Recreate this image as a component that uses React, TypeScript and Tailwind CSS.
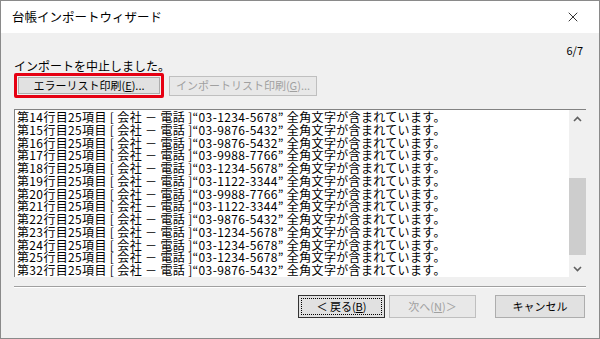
import { X } from "lucide-react";

const rows = [
  { no: 14, tel: "03-1234-5678" },
  { no: 15, tel: "03-9876-5432" },
  { no: 16, tel: "03-9876-5432" },
  { no: 17, tel: "03-9988-7766" },
  { no: 18, tel: "03-1234-5678" },
  { no: 19, tel: "03-1122-3344" },
  { no: 20, tel: "03-9988-7766" },
  { no: 21, tel: "03-1122-3344" },
  { no: 22, tel: "03-9876-5432" },
  { no: 23, tel: "03-1234-5678" },
  { no: 24, tel: "03-1234-5678" },
  { no: 25, tel: "03-1234-5678" },
  { no: 32, tel: "03-9876-5432" },
  { no: 33, tel: "03-1234-5678" },
];

const font = "font-['Noto_Sans_CJK_JP','Noto_Sans',sans-serif]";

const Chevron = ({ down }: { down?: boolean }) => (
  <svg width="9" height="6" viewBox="0 0 9 6" className="text-[#606060]">
    <path
      d={down ? "M1 1 L4.5 4.5 L8 1" : "M1 5 L4.5 1.5 L8 5"}
      fill="none"
      stroke="currentColor"
      strokeWidth="1.6"
    />
  </svg>
);

export default function App() {
  return (
    <div
      className={`flex h-[339px] w-[600px] flex-col border border-[#8a8a8a] bg-[#f0f0f0] text-black ${font}`}>
      {/* Title bar */}
      <div className="flex h-[32px] shrink-0 items-center justify-between bg-white pl-[11px] pr-[18px]">
        <span className="text-[12.5px]">台帳インポートウィザード</span>
        <X size={16} strokeWidth={1.2} className="text-black" />
      </div>

      {/* Body */}
      <div className="flex flex-1 flex-col px-[13px] pt-[10px]">
        <div className="h-[15px] pr-[3px] text-right text-[11px] leading-[15px]">
          6/7
        </div>
        <div className="mt-[1px] h-[14px] text-[12px] leading-[14px]">
          インポートを中止しました。
        </div>

        <div className="flex items-center gap-[5px]">
          <div className="h-[25px] w-[150px] rounded-[2px] border-[3px] border-[#e60012] p-[1px]">
            <button className="flex h-full w-full items-center justify-center border border-[#adadad] bg-[#e1e1e1] text-[11px]">
              エラーリスト印刷(<span className="underline">E</span>)...
            </button>
          </div>
          <button className="flex h-[20px] w-[148px] items-center justify-center border border-[#bfbfbf] bg-[#e8e8e8] text-[11px] text-[#a0a0a0]">
            インポートリスト印刷(<span className="underline">G</span>)...
          </button>
        </div>

        {/* List box */}
        <div className="mt-[11px] flex h-[168px] border-l border-t border-[#828282] border-b-white border-r-white bg-white">
          <div className="flex-1 overflow-hidden pl-[2px] pt-[1px]">
            {rows.map((r) => (
              <div
                key={r.no}
                className="whitespace-nowrap text-[12px] leading-[12.75px] tracking-[0.35px]">
                第{r.no}行目25項目 [ 会社 － 電話 ]“{r.tel}” 全角文字が含まれています。
              </div>
            ))}
          </div>
          <div className="flex w-[17px] flex-col bg-[#f0f0f0]">
            <div className="flex h-[17px] items-center justify-center">
              <Chevron />
            </div>
            <div className="flex-1 pt-[51px] pb-[3px]">
              <div className="h-[77px] w-full bg-[#cdcdcd]" />
            </div>
            <div className="flex h-[17px] items-center justify-center">
              <Chevron down />
            </div>
          </div>
        </div>

        {/* Separator */}
        <div className="mt-[9px] h-[2px] border-t border-[#a0a0a0] border-b border-b-white" />

        {/* Footer buttons */}
        <div className="mt-[7px] flex justify-end pr-[1px]">
          <button className="flex h-[23px] w-[87px] items-center justify-center border border-[#333] bg-[#e1e1e1] p-[2px] text-[11px]">
            <span className="flex h-full w-full items-center justify-center border border-dotted border-black">
              ＜ 戻る(<span className="underline">B</span>)
            </span>
          </button>
          <button className="ml-[4px] flex h-[23px] w-[87px] items-center justify-center border border-[#bfbfbf] bg-[#e8e8e8] text-[11px] text-[#a0a0a0]">
            次へ(<span className="underline">N</span>)＞
          </button>
          <button className="ml-[19px] flex h-[23px] w-[90px] items-center justify-center border border-[#adadad] bg-[#e1e1e1] text-[11px]">
            キャンセル
          </button>
        </div>
      </div>
    </div>
  );
}
